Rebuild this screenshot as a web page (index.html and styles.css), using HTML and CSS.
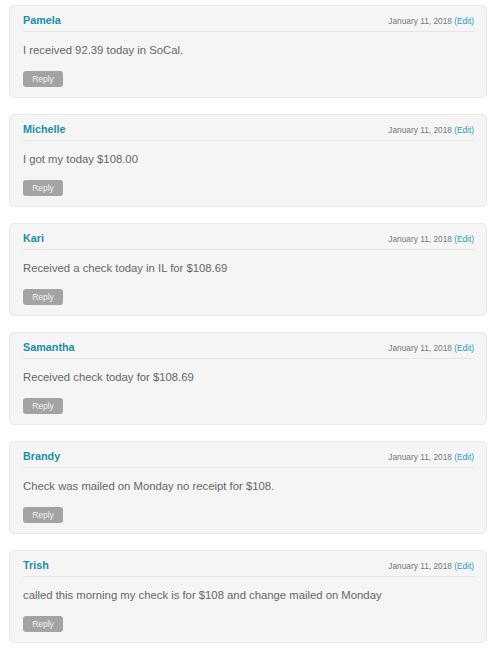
FILE: index.html
```html
<!DOCTYPE html>
<html>
<head>
<meta charset="utf-8">
<link rel="stylesheet" href="styles.css">
</head>
<body>
<div class="list">
  <div class="comment">
    <div class="head"><span class="name">Pamela</span><span class="date">January 11, 2018 <a class="edit">(Edit)</a></span></div>
    <p class="text">I received 92.39 today in SoCal.</p>
    <span class="reply">Reply</span>
  </div>
  <div class="comment">
    <div class="head"><span class="name">Michelle</span><span class="date">January 11, 2018 <a class="edit">(Edit)</a></span></div>
    <p class="text">I got my today $108.00</p>
    <span class="reply">Reply</span>
  </div>
  <div class="comment">
    <div class="head"><span class="name">Kari</span><span class="date">January 11, 2018 <a class="edit">(Edit)</a></span></div>
    <p class="text">Received a check today in IL for $108.69</p>
    <span class="reply">Reply</span>
  </div>
  <div class="comment">
    <div class="head"><span class="name">Samantha</span><span class="date">January 11, 2018 <a class="edit">(Edit)</a></span></div>
    <p class="text">Received check today for $108.69</p>
    <span class="reply">Reply</span>
  </div>
  <div class="comment">
    <div class="head"><span class="name">Brandy</span><span class="date">January 11, 2018 <a class="edit">(Edit)</a></span></div>
    <p class="text">Check was mailed on Monday no receipt for $108.</p>
    <span class="reply">Reply</span>
  </div>
  <div class="comment">
    <div class="head"><span class="name">Trish</span><span class="date">January 11, 2018 <a class="edit">(Edit)</a></span></div>
    <p class="text">called this morning my check is for $108 and change mailed on Monday</p>
    <span class="reply">Reply</span>
  </div>
</div>
</body>
</html>
```
FILE: styles.css
```css
html, body {
  margin: 0;
  padding: 0;
  background: #fff;
  font-family: "Liberation Sans", Arial, sans-serif;
}
.list {
  padding: 5px 10px 0 9px;
  display: flex;
  flex-direction: column;
  gap: 16px;
}
.comment {
  height: 93px;
  box-sizing: border-box;
  background: #f5f5f5;
  border: 1px solid #e8e8e8;
  border-radius: 5px;
  padding: 0 12px 0 13px;
  display: flex;
  flex-direction: column;
  align-items: flex-start;
}
.head {
  align-self: stretch;
  display: flex;
  justify-content: space-between;
  align-items: baseline;
  height: 26px;
  padding-top: 2px;
  box-sizing: border-box;
  border-bottom: 1px solid #e6e6e6;
  line-height: 24px;
}
.name {
  font-size: 10.8px;
  font-weight: bold;
  color: #1b8fa5;
}
.date {
  font-size: 8.3px;
  color: #777;
}
.edit {
  color: #2aa0b8;
}
.text {
  margin: 11px 0 0;
  font-size: 11.3px;
  line-height: 14px;
  color: #666;
}
.reply {
  margin-top: 14px;
  width: 40px;
  height: 16px;
  background: #a3a3a3;
  border-radius: 3px;
  color: #f2f2f2;
  font-size: 8.5px;
  line-height: 16px;
  text-align: center;
}
```
